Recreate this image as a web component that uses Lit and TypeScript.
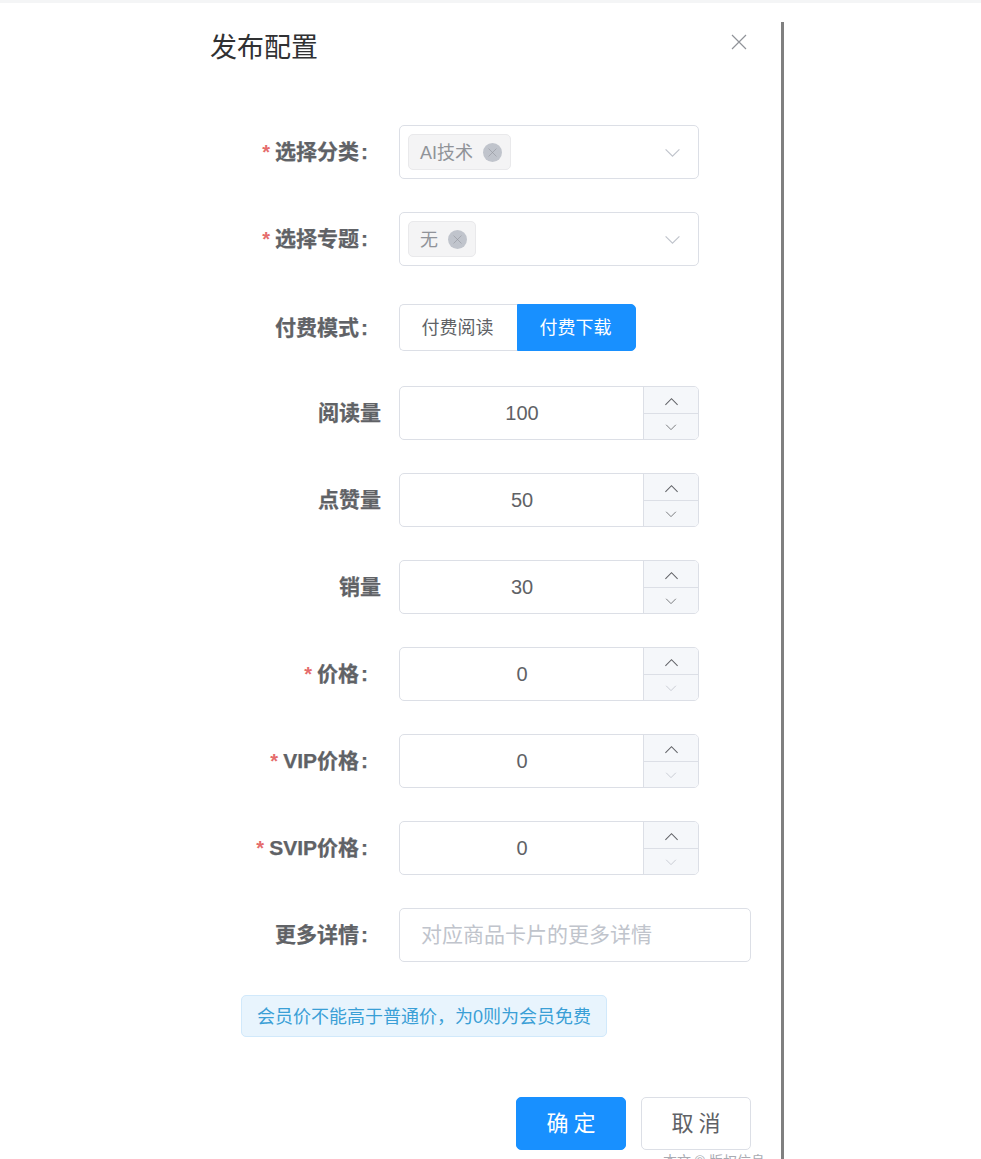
import { LitElement, css, html, svg } from "lit";
import { customElement } from "lit/decorators.js";

const chevron = (up: boolean, size: number, color: string) => html`
  <svg width=${size} height=${size} viewBox="0 0 16 16" fill="none" stroke=${color} stroke-width="1.1">
    ${up ? svg`<path d="M1.5 11.5 8 5l6.5 6.5" />` : svg`<path d="M1.5 5 8 11.5 14.5 5" />`}
  </svg>
`;

const cross = (size: number, color: string, width = 1) => html`
  <svg width=${size} height=${size} viewBox="0 0 16 16" fill="none" stroke=${color} stroke-width=${width}>
    <path d="M1 1l14 14M15 1 1 15" />
  </svg>
`;

@customElement("app-root")
export class AppRoot extends LitElement {
  static styles = css`
    :host {
      display: block;
      height: 1159px;
      overflow: hidden;
      background: #fff;
      font-family: "Liberation Sans", "Noto Sans CJK SC", sans-serif;
      color: #606266;
    }
    .topline {
      height: 3px;
      background: #f4f5f6;
    }
    .stage {
      display: flex;
      height: 1156px;
      padding-top: 19px;
      box-sizing: border-box;
    }
    .dialog {
      box-sizing: border-box;
      width: 574px;
      margin-left: 210px;
      height: 1137px;
      border-right: 3px solid #808080;
    }
    .head {
      display: flex;
      justify-content: space-between;
      align-items: flex-start;
      padding-right: 34px;
      height: 103px;
    }
    .title {
      font-size: 27px;
      line-height: 50px;
      margin-top: 1px;
      color: #303133;
    }
    .close {
      display: flex;
      margin-top: 12px;
    }
    .form {
      display: flex;
      flex-direction: column;
      padding-left: 31px;
    }
    .row {
      display: flex;
      align-items: center;
      height: 54px;
      margin-bottom: 33px;
    }
    .row.pay {
      height: 47px;
      margin-top: 5px;
      margin-bottom: 35px;
    }
    .label {
      box-sizing: border-box;
      width: 140px;
      margin-right: 18px;
      padding-bottom: 4px;
      text-align: right;
      font-size: 21px;
      font-weight: 700;
      -webkit-text-stroke: 0.25px #606266;
      color: #606266;
      white-space: nowrap;
    }
    .label.colon {
      padding-right: 13px;
    }
    .mark {
      margin-left: 2px;
    }
    .req {
      color: #e56c6c;
      -webkit-text-stroke: 0;
      margin-right: 5px;
      font-size: 20px;
    }
    .box {
      box-sizing: border-box;
      height: 54px;
      width: 300px;
      background: #fff;
      border: 1px solid #dcdfe6;
      border-radius: 5px;
      display: flex;
      align-items: center;
    }
    .select {
      justify-content: space-between;
      padding: 0 17px 0 8px;
    }
    .tag {
      display: flex;
      align-items: center;
      gap: 10px;
      height: 36px;
      box-sizing: border-box;
      padding: 0 8px 0 11px;
      background: #f4f4f5;
      border: 1px solid #e9e9eb;
      border-radius: 5px;
      font-size: 18px;
      color: #909399;
    }
    .tag-text {
      padding-bottom: 2px;
    }
    .tag-x {
      display: flex;
      align-items: center;
      justify-content: center;
      width: 19px;
      height: 19px;
      border-radius: 50%;
      background: #c0c4cc;
    }
    .radios {
      display: flex;
      height: 47px;
    }
    .radio {
      box-sizing: border-box;
      width: 118px;
      padding: 0 2px 3px 0;
      display: flex;
      align-items: center;
      justify-content: center;
      font-size: 18px;
      border: 1px solid #dcdfe6;
      color: #606266;
    }
    .radio.first {
      border-radius: 5px 0 0 5px;
      border-right: none;
    }
    .radio.active {
      width: 119px;
      background: #1890ff;
      border-color: #1890ff;
      color: #fff;
      border-radius: 0 5px 5px 0;
    }
    .number {
      overflow: hidden;
    }
    .num-val {
      flex: 1;
      padding-left: 1px;
      text-align: center;
      font-size: 20px;
      color: #606266;
    }
    .steps {
      box-sizing: border-box;
      width: 55px;
      height: 100%;
      border-left: 1px solid #dcdfe6;
      background: #f5f7fa;
      display: flex;
      flex-direction: column;
    }
    .step {
      flex: 1;
      display: flex;
      align-items: center;
      justify-content: center;
    }
    .step.up {
      flex: none;
      box-sizing: border-box;
      height: 26px;
      padding-top: 2px;
    }
    .step + .step {
      border-top: 1px solid #dcdfe6;
    }
    .text {
      width: 352px;
      padding: 0 0 4px 21px;
      font-size: 21px;
      color: #c0c4cc;
    }
    .alert {
      box-sizing: border-box;
      width: 366px;
      height: 42px;
      display: flex;
      align-items: center;
      padding: 0 0 2px 15px;
      background: #e8f4fd;
      border: 1px solid #d1e9fb;
      border-radius: 5px;
      font-size: 18px;
      color: #3a9fd6;
    }
    .foot {
      display: flex;
      justify-content: flex-end;
      gap: 15px;
      margin-top: 60px;
      padding-right: 30px;
    }
    .btn {
      box-sizing: border-box;
      width: 110px;
      height: 53px;
      padding-bottom: 5px;
      display: flex;
      align-items: center;
      justify-content: center;
      border-radius: 5px;
      font-size: 22px;
      letter-spacing: 5px;
      text-indent: 5px;
      border: 1px solid #dcdfe6;
      background: #fff;
      color: #606266;
    }
    .btn.primary {
      background: #1890ff;
      border-color: #1890ff;
      color: #fff;
    }
    .watermark {
      margin-top: 3px;
      padding-right: 16px;
      text-align: right;
      font-size: 14px;
      line-height: 16px;
      color: #a8abb2;
    }
  `;

  private tag(text: string) {
    return html`
      <div class="box select">
        <span class="tag">
          <span class="tag-text">${text}</span>
          <span class="tag-x">${cross(9, "#909399")}</span>
        </span>
        ${chevron(false, 17, "#c0c4cc")}
      </div>
    `;
  }

  private number(value: string, minDisabled = false) {
    return html`
      <div class="box number">
        <span class="num-val">${value}</span>
        <div class="steps">
          <span class="step up">${chevron(true, 15, "#606266")}</span>
          <span class="step">${chevron(false, 12, minDisabled ? "#c0c4cc" : "#606266")}</span>
        </div>
      </div>
    `;
  }

  private label(text: string, required = false, colon = true) {
    return html`
      <label class="label ${colon ? "colon" : ""}">
        ${required ? html`<span class="req">*</span>` : ""}${text}${colon ? html`<span class="mark">:</span>` : ""}
      </label>
    `;
  }

  render() {
    return html`
      <div class="topline"></div>
      <div class="stage">
        <div class="dialog">
          <div class="head">
            <div class="title">发布配置</div>
            <span class="close">${cross(16, "#909399", 1.2)}</span>
          </div>
          <div class="form">
            <div class="row">${this.label("选择分类", true)}${this.tag("AI技术")}</div>
            <div class="row">${this.label("选择专题", true)}${this.tag("无")}</div>
            <div class="row pay">
              ${this.label("付费模式")}
              <div class="radios">
                <span class="radio first">付费阅读</span>
                <span class="radio active">付费下载</span>
              </div>
            </div>
            <div class="row">${this.label("阅读量", false, false)}${this.number("100")}</div>
            <div class="row">${this.label("点赞量", false, false)}${this.number("50")}</div>
            <div class="row">${this.label("销量", false, false)}${this.number("30")}</div>
            <div class="row">${this.label("价格", true)}${this.number("0", true)}</div>
            <div class="row">${this.label("VIP价格", true)}${this.number("0", true)}</div>
            <div class="row">${this.label("SVIP价格", true)}${this.number("0", true)}</div>
            <div class="row">
              ${this.label("更多详情")}
              <div class="box text">对应商品卡片的更多详情</div>
            </div>
            <div class="alert">会员价不能高于普通价，为0则为会员免费</div>
            <div class="foot">
              <span class="btn primary">确定</span>
              <span class="btn">取消</span>
            </div>
            <div class="watermark">本文 © 版权信息</div>
          </div>
        </div>
      </div>
    `;
  }
}
